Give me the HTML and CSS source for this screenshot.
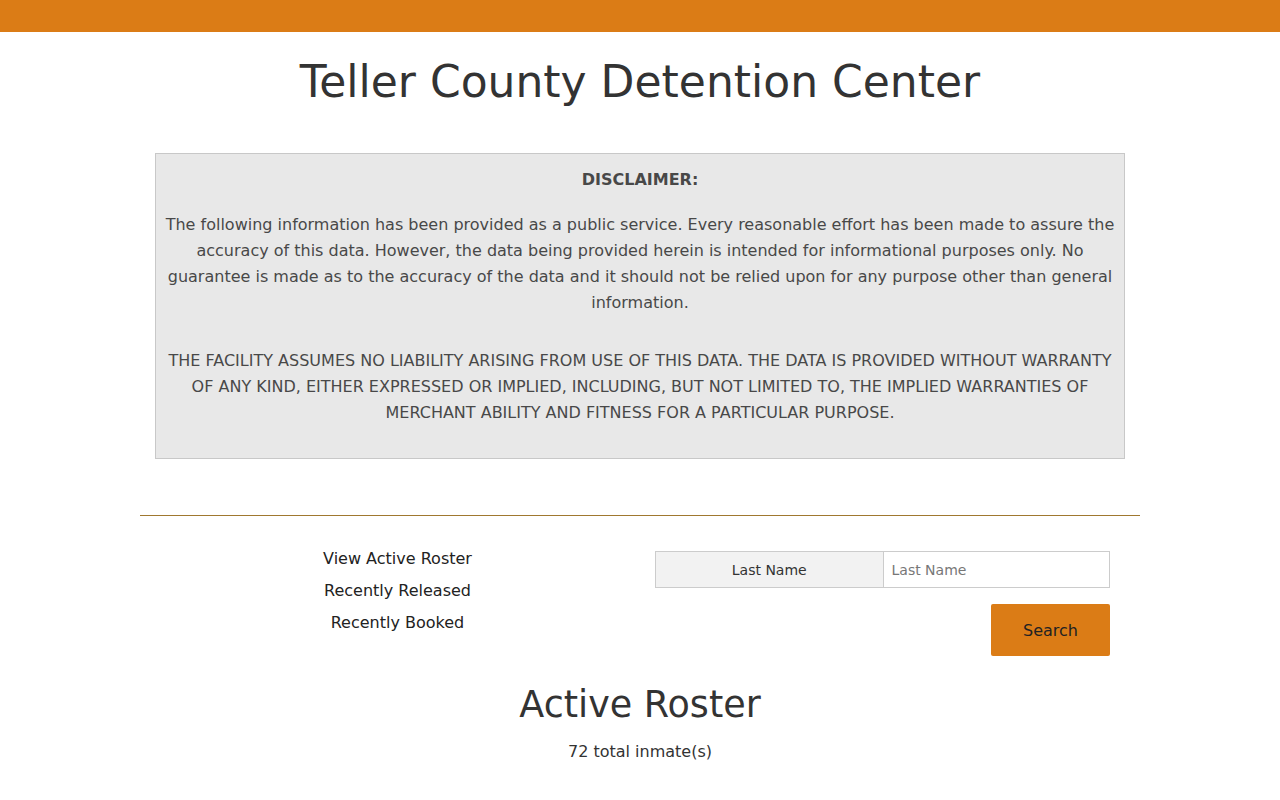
FILE: index.html
```html
<!DOCTYPE html>
<html lang="en">
<head>
    <meta charset="UTF-8">
    <meta name="viewport" content="width=device-width, initial-scale=1.0">
    <title>Teller County Detention Center</title>
    <link rel="stylesheet" href="styles.css">
</head>
<body>
    <div class="top-bar"></div>
    <div class="container">
        <h1 class="page-title">Teller County Detention Center</h1>

        <div class="disclaimer">
            <p class="disclaimer-title">DISCLAIMER:</p>
            <p>The following information has been provided as a public service. Every reasonable effort has been made to assure the accuracy of this data. However, the data being provided herein is intended for informational purposes only. No guarantee is made as to the accuracy of the data and it should not be relied upon for any purpose other than general information.</p>
            <p class="disclaimer-legal">THE FACILITY ASSUMES NO LIABILITY ARISING FROM USE OF THIS DATA. THE DATA IS PROVIDED WITHOUT WARRANTY OF ANY KIND, EITHER EXPRESSED OR IMPLIED, INCLUDING, BUT NOT LIMITED TO, THE IMPLIED WARRANTIES OF MERCHANT ABILITY AND FITNESS FOR A PARTICULAR PURPOSE.</p>
        </div>

        <hr class="divider">

        <div class="search-row">
            <div class="roster-links">
                <a href="#">View Active Roster</a>
                <a href="#">Recently Released</a>
                <a href="#">Recently Booked</a>
            </div>
            <div class="search-form">
                <div class="input-group">
                    <span class="input-label">Last Name</span>
                    <input type="text" class="input-field" placeholder="Last Name">
                </div>
                <button class="search-button">Search</button>
            </div>
        </div>

        <h2 class="roster-title">Active Roster</h2>
        <p class="roster-count">72 total inmate(s)</p>
    </div>
</body>
</html>
```

FILE: styles.css
```css
body {
    font-family: "DejaVu Sans", Verdana, sans-serif;
    margin: 0;
    padding: 0;
    background-color: #fff;
    color: #333;
}

.top-bar {
    height: 32px;
    background-color: #db7c16;
}

.container {
    width: 1000px;
    margin: 0 auto;
}

.page-title {
    font-size: 44px;
    font-weight: normal;
    line-height: 53px;
    text-align: center;
    margin: 23px 0 0;
    color: #333;
}

.disclaimer {
    margin: 45px 15px 0;
    padding: 13px 8px 32px;
    background-color: #e8e8e8;
    border: 1px solid #c8c8c8;
    color: #484848;
    font-size: 16px;
    line-height: 26px;
    text-align: center;
}

.disclaimer p {
    margin: 0;
}

.disclaimer .disclaimer-title {
    font-weight: bold;
    margin-bottom: 19px;
}

.disclaimer .disclaimer-legal {
    margin-top: 32px;
}

.divider {
    height: 0;
    margin: 56px 0 0;
    border: 0;
    border-top: 1px solid #a0782f;
}

.search-row {
    display: flex;
    margin: 27px 15px 0;
}

.roster-links,
.search-form {
    width: 50%;
    padding: 0 15px;
    box-sizing: border-box;
}

.roster-links {
    display: flex;
    flex-direction: column;
    align-items: center;
}

.roster-links a {
    color: #222;
    text-decoration: none;
    font-size: 16px;
    line-height: 32px;
}

.search-form {
    display: flex;
    flex-direction: column;
    align-items: flex-end;
    padding-top: 8px;
}

.input-group {
    display: flex;
    width: 100%;
    height: 37px;
}

.input-label {
    width: 50%;
    box-sizing: border-box;
    background-color: #f2f2f2;
    border: 1px solid #ccc;
    border-right: none;
    color: #333;
    font-size: 14px;
    display: flex;
    align-items: center;
    justify-content: center;
}

.input-field {
    width: 50%;
    box-sizing: border-box;
    border: 1px solid #ccc;
    padding: 0 8px;
    font-family: inherit;
    font-size: 14px;
    color: #333;
}

.input-field::placeholder {
    color: #777;
}

.search-button {
    margin-top: 16px;
    width: 119px;
    height: 52px;
    background-color: #db7c16;
    color: #222;
    border: none;
    border-radius: 2px;
    font-family: inherit;
    font-size: 16px;
    cursor: pointer;
}

.roster-title {
    font-size: 36.5px;
    font-weight: normal;
    line-height: 43px;
    text-align: center;
    margin: 27px 0 0;
    color: #333;
}

.roster-count {
    font-size: 16px;
    line-height: 24px;
    text-align: center;
    margin: 14px 0 0;
    color: #333;
}
```
